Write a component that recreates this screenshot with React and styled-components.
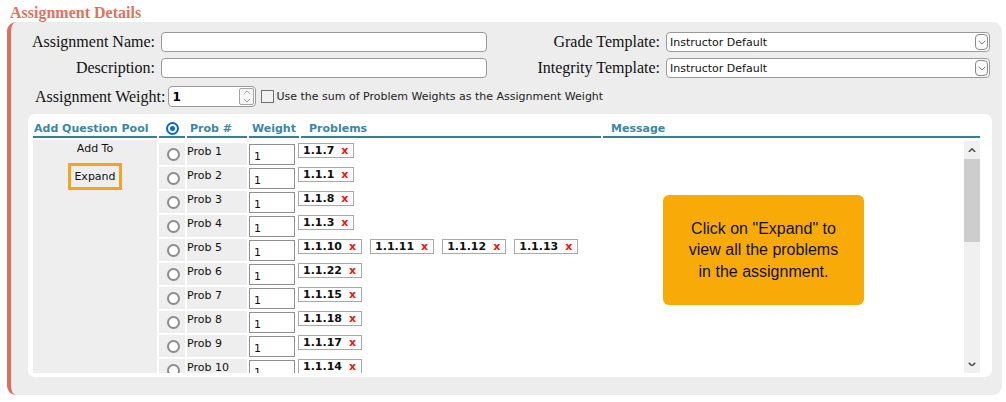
import React from 'react'
import styled, { createGlobalStyle } from 'styled-components'

const GlobalStyle = createGlobalStyle`
  body {
    margin: 0;
    background: #fff;
    font-family: "DejaVu Sans", Verdana, sans-serif;
  }
`

const Page = styled.div`
  width: 1006px;
  height: 402px;
  overflow: hidden;
  padding: 3px 0 0 7px;
  box-sizing: border-box;
`

const Title = styled.h2`
  margin: 0 0 0 3px;
  font: bold 16px/19px "Liberation Serif", serif;
  color: #e2725b;
`

const Panel = styled.div`
  width: 995px;
  height: 373px;
  box-sizing: border-box;
  border-left: 4px solid #df6f5c;
  border-radius: 9px;
  background: #ededed;
  padding: 10px 10px 0 0;
`

const FormGrid = styled.div`
  display: grid;
  grid-template-columns: 144px 326px 1fr 324px;
  column-gap: 6px;
  row-gap: 6px;
  align-items: center;
  margin-right: 2px;
`

const Label = styled.label`
  font: 16px/20px "Liberation Serif", serif;
  color: #111;
  text-align: right;
  white-space: nowrap;
`

const TextInput = styled.div`
  height: 20px;
  box-sizing: border-box;
  border: 1px solid #9a9a9a;
  border-radius: 4px;
  background: #fff;
`

const Select = styled.div`
  height: 20px;
  box-sizing: border-box;
  border: 1px solid #9a9a9a;
  border-radius: 4px;
  background: #fff;
  display: flex;
  align-items: center;
  justify-content: space-between;
  padding: 0 1px 0 3px;
  font-size: 11px;
  color: #111;
`

const SelectArrow = styled.span`
  width: 11px;
  height: 14px;
  border: 1px solid #8a8a8a;
  border-radius: 4px;
  display: flex;
  align-items: center;
  justify-content: center;
  background: #fafafa;
`

const WeightRow = styled.div`
  display: flex;
  align-items: center;
  margin-top: 8px;
  padding-left: 24px;
`

const WeightLabel = styled(Label)`
  margin-right: 3px;
`

const Spinner = styled.div`
  width: 88px;
  height: 21px;
  box-sizing: border-box;
  border: 1px solid #9a9a9a;
  border-radius: 4px;
  background: #fff;
  display: flex;
  align-items: center;
  justify-content: space-between;
  padding: 0 1px 0 3px;
  font: bold 12px "DejaVu Sans", sans-serif;
`

const SpinButtons = styled.span`
  width: 15px;
  height: 17px;
  box-sizing: border-box;
  border: 1px solid #a5a5a5;
  border-radius: 2px;
  display: flex;
  flex-direction: column;
  align-items: center;
  justify-content: space-around;
  background: #f7f7f7;
`

const Checkbox = styled.span`
  width: 13px;
  height: 13px;
  box-sizing: border-box;
  border: 1px solid #707070;
  background: #f2f2f2;
  margin: 0 2px 0 5px;
`

const CheckText = styled.span`
  font-size: 11px;
  color: #222;
`

const WhitePanel = styled.div`
  position: relative;
  margin: 7px 0 0 17px;
  height: 263px;
  box-sizing: border-box;
  background: #fff;
  border-radius: 7px;
  padding: 7px 12px 0 5px;
`

const HeaderGrid = styled.div`
  display: grid;
  grid-template-columns: 124px 26px 60px 50px 300px 1fr;
  column-gap: 2px;
`

const HeadCell = styled.div`
  border-bottom: 2px solid #2f8394;
  color: #3a88a4;
  font-size: 11px;
  font-weight: bold;
  line-height: 15px;
  padding-left: ${p => p.$pad || 0}px;
  display: flex;
  align-items: center;
  justify-content: ${p => (p.$center ? 'center' : 'flex-start')};
  white-space: nowrap;
`

const Body = styled.div`
  display: flex;
  margin-top: 2px;
  height: 233px;
`

const LeftPool = styled.div`
  width: 124px;
  flex: none;
  margin-right: 2px;
  background: #eeeeee;
  display: flex;
  flex-direction: column;
  align-items: center;
  padding-top: 2px;
  font-size: 11px;
  color: #111;
`

const PoolText = styled.div`
  line-height: 14px;
`

const ExpandButton = styled.div`
  margin-top: 7px;
  border: 3px solid #f3a51c;
  padding: 4px 3px;
  line-height: 13px;
  font-size: 11px;
  color: #111;
`

const Rows = styled.div`
  flex: 1;
  overflow: hidden;
  display: flex;
  flex-direction: column;
  gap: 2px;
  padding-top: 3px;
`

const Row = styled.div`
  display: grid;
  grid-template-columns: 26px 60px 46px 1fr;
  column-gap: 2px;
  height: 22px;
  flex: none;
`

const RadioCell = styled.div`
  background: #eeeeee;
  display: flex;
  align-items: center;
  justify-content: center;
  padding-left: 2px;
`

const Radio = styled.span`
  width: 13px;
  height: 13px;
  box-sizing: border-box;
  border-radius: 50%;
  border: 2px solid ${p => (p.$on ? '#0b66d8' : '#8c8c8c')};
  background: #fff;
  display: flex;
  align-items: center;
  justify-content: center;
  &::after {
    content: '';
    width: 5px;
    height: 5px;
    border-radius: 50%;
    background: ${p => (p.$on ? '#0b66d8' : 'transparent')};
  }
`

const ProbCell = styled.div`
  background: #eeeeee;
  font-size: 11px;
  line-height: 14px;
  padding: 2px 0 0 0;
  color: #111;
  white-space: nowrap;
`

const WeightInput = styled.div`
  height: 21px;
  margin-top: 1px;
  box-sizing: border-box;
  border: 1px solid #909090;
  background: #fff;
  font-size: 11px;
  padding: 5px 0 0 4px;
  line-height: 14px;
  color: #111;
`

const Problems = styled.div`
  display: flex;
  align-items: flex-start;
  gap: 8px;
  padding-left: 1px;
`

const Chip = styled.span`
  display: inline-flex;
  align-items: center;
  gap: 7px;
  height: 15px;
  box-sizing: border-box;
  border: 1px solid #a8a8a8;
  padding: 0 5px 0 4px;
  font-size: 11px;
  font-weight: bold;
  color: #111;
`

const Remove = styled.span`
  color: #ee1111;
`

const Scrollbar = styled.div`
  width: 16px;
  flex: none;
  margin-top: 1px;
  background: #f0f0f0;
  display: flex;
  flex-direction: column;
`

const ScrollButton = styled.div`
  height: 18px;
  display: flex;
  align-items: center;
  justify-content: center;
`

const Thumb = styled.div`
  height: 83px;
  background: #cdcdcd;
`

const Track = styled.div`
  flex: 1;
`

const Callout = styled.div`
  position: absolute;
  left: 635px;
  top: 81px;
  width: 201px;
  height: 110px;
  border-radius: 6px;
  background: #f8ab08;
  display: flex;
  align-items: center;
  justify-content: center;
  text-align: center;
  font: 16px/21.5px "Liberation Sans", Arial, sans-serif;
  color: #111;
`

const Chevron = ({ up, size = 8, color = '#666', width = 1.2 }) => (
  <svg width={size} height={size * 0.6} viewBox="0 0 10 6">
    <polyline
      points={up ? '1,5 5,1 9,5' : '1,1 5,5 9,1'}
      fill="none"
      stroke={color}
      strokeWidth={width}
    />
  </svg>
)

const problems = [
  ['1.1.7'],
  ['1.1.1'],
  ['1.1.8'],
  ['1.1.3'],
  ['1.1.10', '1.1.11', '1.1.12', '1.1.13'],
  ['1.1.22'],
  ['1.1.15'],
  ['1.1.18'],
  ['1.1.17'],
  ['1.1.14'],
]

export default function App() {
  return (
    <Page>
      <GlobalStyle />
      <Title>Assignment Details</Title>
      <Panel>
        <FormGrid>
          <Label>Assignment Name:</Label>
          <TextInput />
          <Label>Grade Template:</Label>
          <Select>
            Instructor Default
            <SelectArrow>
              <Chevron size={8} color="#777" />
            </SelectArrow>
          </Select>
          <Label>Description:</Label>
          <TextInput />
          <Label>Integrity Template:</Label>
          <Select>
            Instructor Default
            <SelectArrow>
              <Chevron size={8} color="#777" />
            </SelectArrow>
          </Select>
        </FormGrid>
        <WeightRow>
          <WeightLabel>Assignment Weight:</WeightLabel>
          <Spinner>
            1
            <SpinButtons>
              <Chevron up size={8} color="#888" width={1} />
              <Chevron size={8} color="#888" width={1} />
            </SpinButtons>
          </Spinner>
          <Checkbox />
          <CheckText>Use the sum of Problem Weights as the Assignment Weight</CheckText>
        </WeightRow>
        <WhitePanel>
          <HeaderGrid>
            <HeadCell $pad={1}>Add Question Pool</HeadCell>
            <HeadCell $center>
              <Radio $on />
            </HeadCell>
            <HeadCell $pad={3}>Prob #</HeadCell>
            <HeadCell $pad={3}>Weight</HeadCell>
            <HeadCell $pad={8}>Problems</HeadCell>
            <HeadCell $pad={8}>Message</HeadCell>
          </HeaderGrid>
          <Body>
            <LeftPool>
              <PoolText>Add To</PoolText>
              <ExpandButton>Expand</ExpandButton>
            </LeftPool>
            <Rows>
              {problems.map((list, i) => (
                <Row key={i}>
                  <RadioCell>
                    <Radio />
                  </RadioCell>
                  <ProbCell>Prob {i + 1}</ProbCell>
                  <WeightInput>1</WeightInput>
                  <Problems>
                    {list.map(p => (
                      <Chip key={p}>
                        {p}
                        <Remove>x</Remove>
                      </Chip>
                    ))}
                  </Problems>
                </Row>
              ))}
            </Rows>
            <Scrollbar>
              <ScrollButton>
                <Chevron up size={8} color="#505050" width={2} />
              </ScrollButton>
              <Thumb />
              <Track />
              <ScrollButton>
                <Chevron size={8} color="#505050" width={2} />
              </ScrollButton>
            </Scrollbar>
          </Body>
          <Callout>
            Click on "Expand" to
            <br />
            view all the problems
            <br />
            in the assignment.
          </Callout>
        </WhitePanel>
      </Panel>
    </Page>
  )
}
